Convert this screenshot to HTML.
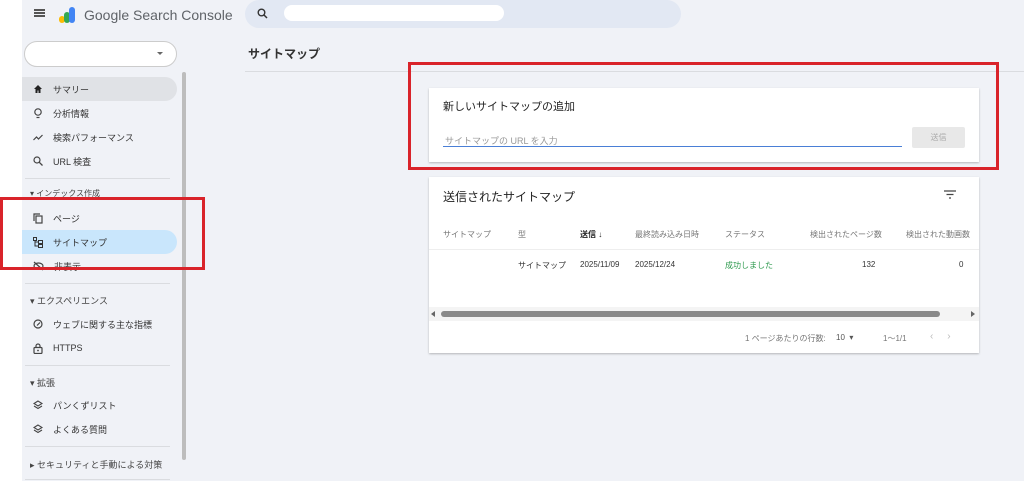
<!DOCTYPE html>
<html><head><meta charset="utf-8"><style>
*{box-sizing:border-box;margin:0;padding:0}
body{width:1024px;height:481px;overflow:hidden;background:#f0f2f7;font-family:"Liberation Sans","Noto Sans CJK JP",sans-serif;color:#333;position:relative}
.a{position:absolute}
.it{position:absolute;left:22px;width:155px;height:24px;font-size:9px;color:#333;display:flex;align-items:center;padding-left:11px}
.it svg{margin-right:10px;flex:none}
.div{position:absolute;left:25px;width:145px;height:1px;background:#dadce0}
.sec{position:absolute;left:30px;font-size:9px;color:#444}
.card{position:absolute;background:#fff;box-shadow:0 1px 2px rgba(0,0,0,.25)}
.t{position:absolute;font-size:8px;color:#777;white-space:nowrap}
</style></head><body>
<div class="a" style="left:0;top:0;width:22px;height:481px;background:#fff"></div>
<div class="a" style="left:34px;top:9px;width:11px;height:2px;background:#555;box-shadow:0 3px 0 #555,0 6px 0 #555"></div>
<svg class="a" style="left:58px;top:5px" width="20" height="20"><rect x="1" y="11" width="6" height="7" rx="3" fill="#fbbc04"/><rect x="6" y="7" width="6" height="11" rx="3" fill="#34a853"/><rect x="11" y="2" width="6" height="16" rx="3" fill="#4285f4"/></svg>
<div class="a" style="left:84px;top:7px;font-size:14px;color:#5f6368">Google Search Console</div>
<div class="a" style="left:245px;top:0;width:436px;height:28px;border-radius:14px;background:#e2e8f3"></div>
<div class="a" style="left:284px;top:5px;width:220px;height:16px;border-radius:8px;background:#fff"></div>
<svg class="a" style="left:257px;top:8px" width="11" height="11"><circle cx="4.5" cy="4.5" r="3.3" stroke="#333" stroke-width="1.4" fill="none"/><line x1="7" y1="7" x2="10" y2="10" stroke="#333" stroke-width="1.5"/></svg>
<div class="a" style="left:24px;top:41px;width:153px;height:26px;border-radius:13px;border:1px solid #ccc;background:#fff"></div>
<div class="a" style="left:157px;top:52px;border:3px solid transparent;border-top:3px solid #666"></div>
<div class="a" style="left:245px;top:71px;width:779px;height:1px;background:#dadce0"></div>
<div class="a" style="left:248px;top:45px;font-size:12px;color:#333;font-weight:600">サイトマップ</div>
<div class="a" style="left:182px;top:72px;width:4px;height:388px;background:#bdbdbd;border-radius:2px"></div>
<div class="it" style="top:77px;background:#e0e2e6;border-radius:0 12px 12px 0"><svg width="10" height="10"><path d="M5 1L1 5h1.5v4h2V6.5h1V9h2V5H9z" fill="#222"/></svg>サマリー</div>
<div class="it" style="top:101px"><svg width="10" height="11"><circle cx="5" cy="4" r="3.2" stroke="#444" stroke-width="1.2" fill="none"/><line x1="3.5" y1="9.5" x2="6.5" y2="9.5" stroke="#444" stroke-width="1.2"/></svg>分析情報</div>
<div class="it" style="top:125px"><svg width="10" height="10"><path d="M0.5 8l3-3 2 2 4-4" stroke="#444" stroke-width="1.2" fill="none"/></svg>検索パフォーマンス</div>
<div class="it" style="top:149px"><svg width="10" height="10"><circle cx="4" cy="4" r="3" stroke="#444" stroke-width="1.2" fill="none"/><line x1="6.3" y1="6.3" x2="9.5" y2="9.5" stroke="#444" stroke-width="1.3"/></svg>URL 検査</div>
<div class="div" style="top:178px"></div>
<div class="sec" style="top:188px;font-size:8px">▾ インデックス作成</div>
<div class="it" style="top:206px"><svg width="10" height="11"><rect x="3" y="3" width="6" height="7" stroke="#444" stroke-width="1.2" fill="none"/><path d="M1 8V1h6" stroke="#444" stroke-width="1.2" fill="none"/></svg>ページ</div>
<div class="it" style="top:230px;background:#c9e6fc;border-radius:0 12px 12px 0"><svg width="10" height="11"><rect x="0.5" y="0.5" width="3" height="3" stroke="#333" fill="none"/><rect x="5.5" y="3.5" width="4" height="3" stroke="#333" fill="none"/><rect x="5.5" y="7.5" width="4" height="3" stroke="#333" fill="none"/><path d="M2 4v5h3.5M2 5h3.5" stroke="#333" fill="none"/></svg>サイトマップ</div>
<div class="it" style="top:254px"><svg width="11" height="10"><ellipse cx="5.5" cy="5" rx="4.5" ry="3" stroke="#444" stroke-width="1.2" fill="none"/><line x1="1" y1="1" x2="10" y2="9" stroke="#444" stroke-width="1.2"/></svg>非表示</div>
<div class="div" style="top:283px"></div>
<div class="sec" style="top:294px">▾ エクスペリエンス</div>
<div class="it" style="top:312px"><svg width="10" height="10"><circle cx="5" cy="5" r="4" stroke="#444" stroke-width="1.2" fill="none"/><line x1="4" y1="6.5" x2="7" y2="3.5" stroke="#444" stroke-width="1.2"/></svg>ウェブに関する主な指標</div>
<div class="it" style="top:336px"><svg width="10" height="11"><rect x="1" y="4.5" width="8" height="6" rx="1" stroke="#444" stroke-width="1.2" fill="none"/><path d="M3 4.5V3a2 2 0 014 0v1.5" stroke="#444" stroke-width="1.2" fill="none"/><circle cx="5" cy="7.5" r="0.9" fill="#444"/></svg>HTTPS</div>
<div class="div" style="top:365px"></div>
<div class="sec" style="top:376px">▾ 拡張</div>
<div class="it" style="top:393px"><svg width="10" height="10"><path d="M5 1L1 3.5 5 6l4-2.5zM1 6l4 2.5L9 6" stroke="#444" stroke-width="1.1" fill="none"/></svg>パンくずリスト</div>
<div class="it" style="top:417px"><svg width="10" height="10"><path d="M5 1L1 3.5 5 6l4-2.5zM1 6l4 2.5L9 6" stroke="#444" stroke-width="1.1" fill="none"/></svg>よくある質問</div>
<div class="div" style="top:446px"></div>
<div class="sec" style="top:458px">▸ セキュリティと手動による対策</div>
<div class="div" style="top:479px"></div>
<div class="card" style="left:429px;top:88px;width:550px;height:74px"></div>
<div class="a" style="left:443px;top:98px;font-size:11px;color:#222">新しいサイトマップの追加</div>
<div class="a" style="left:445px;top:134px;font-size:9px;color:#999">サイトマップの URL を入力</div>
<div class="a" style="left:443px;top:146px;width:459px;height:1px;background:#4a7fd6"></div>
<div class="a" style="left:912px;top:127px;width:53px;height:21px;background:#e8e8e8;border-radius:2px;font-size:8px;color:#aaa;text-align:center;line-height:21px">送信</div>
<div class="card" style="left:429px;top:177px;width:550px;height:176px"></div>
<div class="a" style="left:443px;top:188px;font-size:12px;color:#222">送信されたサイトマップ</div>
<svg class="a" style="left:944px;top:190px" width="12" height="9"><path d="M0 1h12M2.5 4.5h7M5 8h2" stroke="#444" stroke-width="1.3"/></svg>
<div class="t" style="left:443px;top:229px">サイトマップ</div>
<div class="t" style="left:518px;top:229px">型</div>
<div class="t" style="left:580px;top:229px;color:#222;font-weight:bold">送信 ↓</div>
<div class="t" style="left:635px;top:229px">最終読み込み日時</div>
<div class="t" style="left:725px;top:229px">ステータス</div>
<div class="t" style="left:810px;top:229px">検出されたページ数</div>
<div class="t" style="left:906px;top:229px">検出された動画数</div>
<div class="a" style="left:429px;top:249px;width:550px;height:1px;background:#eee"></div>
<div class="t" style="left:518px;top:260px;color:#333">サイトマップ</div>
<div class="t" style="left:580px;top:260px;color:#333">2025/11/09</div>
<div class="t" style="left:635px;top:260px;color:#333">2025/12/24</div>
<div class="t" style="left:725px;top:260px;color:#2e9a4e">成功しました</div>
<div class="t" style="left:862px;top:260px;color:#333">132</div>
<div class="t" style="left:959px;top:260px;color:#333">0</div>
<div class="a" style="left:429px;top:307px;width:550px;height:14px;background:#f4f4f4"></div>
<div class="a" style="left:441px;top:311px;width:499px;height:6px;border-radius:3px;background:#8a8a8a"></div>
<div class="a" style="left:431px;top:311px;border:3px solid transparent;border-right:4px solid #666;border-left:0"></div>
<div class="a" style="left:971px;top:311px;border:3px solid transparent;border-left:4px solid #666;border-right:0"></div>
<div class="t" style="left:745px;top:333px">1 ページあたりの行数:</div>
<div class="t" style="left:836px;top:333px;color:#555">10 &nbsp;▾</div>
<div class="t" style="left:883px;top:333px">1〜1/1</div>
<div class="t" style="left:930px;top:331px;font-size:10px;color:#bbb">‹ &nbsp;&nbsp;&nbsp; ›</div>
<div class="a" style="left:408px;top:62px;width:591px;height:108px;border:3px solid #d9232a"></div>
<div class="a" style="left:0;top:197px;width:205px;height:73px;border:3px solid #d9232a"></div>
</body></html>
